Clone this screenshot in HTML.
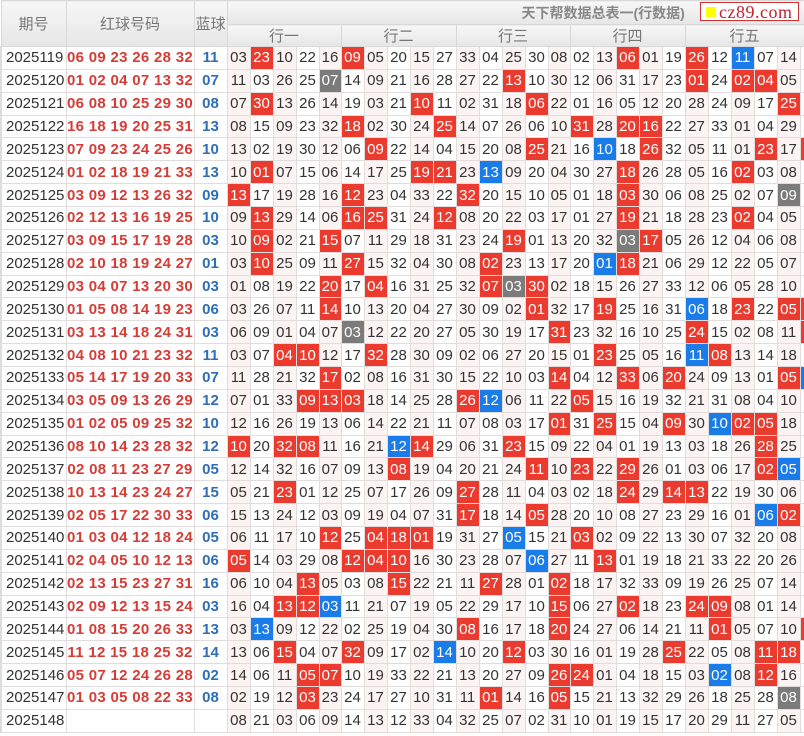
<!DOCTYPE html>
<html><head><meta charset="utf-8"><style>
body{margin:0;width:804px;height:736px;overflow:hidden;background:#fff;font-family:"Liberation Sans","Noto Sans CJK SC",sans-serif;}
table{border-collapse:collapse;table-layout:fixed;width:804px;position:absolute;left:0;top:0}
td{padding:0;text-align:center;font-size:15px;color:#333;border:1px solid #e2dcdc;height:21.87px;line-height:21px;white-space:nowrap;overflow:hidden;background:#fff}
tr.d td:nth-child(n+4){background:#fcf4f2}
tr.d td:nth-child(2n+5){background:#fff}
tr.d td:first-child{text-align:left;padding-left:4px;border-left:2px solid #ddd}
td.h{color:#d63c36;font-weight:bold;font-size:15px;letter-spacing:0.3px}
td.l{color:#2e6db8;font-weight:bold}
tr.d td.r{background:#eb3b2f;color:#fff}
tr.d td.b{background:#1a7ce8;color:#fff}
tr.d td.g{background:#7b7b7b;color:#fff}
tr.d td:nth-child(4),tr.d td:nth-child(9),tr.d td:nth-child(14),tr.d td:nth-child(19),tr.d td:nth-child(24),tr.d td:nth-child(29){border-left:1.5px solid #000}
th{font-weight:normal;color:#777;font-size:15px;background:linear-gradient(#f7f7f7,#e6e6e6);border:1px solid #d8d8d8;padding:0}
.t1 th{height:23px}
.t2 th{height:21px}
.logo{position:absolute;left:700px;top:2px;width:99px;height:19px;background:#fff;border:1px solid #c33;box-sizing:border-box}
.logo i{position:absolute;left:5px;top:4px;width:10px;height:10px;background:#ff0}
.logo span{position:absolute;left:18px;top:-1px;font-family:"Liberation Serif",serif;color:#c0232d;font-size:18px;letter-spacing:0.5px}
</style></head><body>
<table>
<colgroup><col style="width:65px"><col style="width:128px"><col style="width:33px">
<col style="width:23px"><col style="width:23px"><col style="width:23px"><col style="width:23px"><col style="width:22px">
<col style="width:23px"><col style="width:23px"><col style="width:23px"><col style="width:23px"><col style="width:23px">
<col style="width:23px"><col style="width:23px"><col style="width:23px"><col style="width:23px"><col style="width:22px">
<col style="width:23px"><col style="width:23px"><col style="width:23px"><col style="width:23px"><col style="width:23px">
<col style="width:23px"><col style="width:23px"><col style="width:23px"><col style="width:23px"><col style="width:23px">
<col style="width:4px"></colgroup>
<tr class="t1"><th rowspan="2">期号</th><th rowspan="2">红球号码</th><th rowspan="2">蓝球</th><th colspan="26" style="text-align:left;padding-left:294px;font-weight:bold;color:#888;font-size:14px">天下帮数据总表一(行数据)</th></tr>
<tr class="t2"><th colspan="5">行一</th><th colspan="5">行二</th><th colspan="5">行三</th><th colspan="5">行四</th><th colspan="6" style="text-align:left;padding-left:44px">行五</th></tr>
<tr class="d"><td>2025119</td><td class="h">06 09 23 26 28 32</td><td class="l">11</td><td>03</td><td class="r">23</td><td>10</td><td>22</td><td>16</td><td class="r">09</td><td>05</td><td>20</td><td>15</td><td>27</td><td>33</td><td>04</td><td>25</td><td>30</td><td>08</td><td>02</td><td>13</td><td class="r">06</td><td>01</td><td>19</td><td class="r">26</td><td>12</td><td class="b">11</td><td>07</td><td>14</td><td></td></tr>
<tr class="d"><td>2025120</td><td class="h">01 02 04 07 13 32</td><td class="l">07</td><td>11</td><td>03</td><td>26</td><td>25</td><td class="g">07</td><td>14</td><td>09</td><td>21</td><td>16</td><td>28</td><td>27</td><td>22</td><td class="r">13</td><td>10</td><td>30</td><td>12</td><td>06</td><td>31</td><td>17</td><td>23</td><td class="r">01</td><td>24</td><td class="r">02</td><td class="r">04</td><td>05</td><td></td></tr>
<tr class="d"><td>2025121</td><td class="h">06 08 10 25 29 30</td><td class="l">08</td><td>07</td><td class="r">30</td><td>13</td><td>26</td><td>14</td><td>19</td><td>03</td><td>21</td><td class="r">10</td><td>11</td><td>02</td><td>31</td><td>18</td><td class="r">06</td><td>22</td><td>01</td><td>16</td><td>05</td><td>12</td><td>20</td><td>28</td><td>24</td><td>09</td><td>17</td><td class="r">25</td><td></td></tr>
<tr class="d"><td>2025122</td><td class="h">16 18 19 20 25 31</td><td class="l">13</td><td>08</td><td>15</td><td>09</td><td>23</td><td>32</td><td class="r">18</td><td>02</td><td>30</td><td>24</td><td class="r">25</td><td>14</td><td>07</td><td>26</td><td>06</td><td>10</td><td class="r">31</td><td>28</td><td class="r">20</td><td class="r">16</td><td>22</td><td>27</td><td>33</td><td>01</td><td>04</td><td>29</td><td></td></tr>
<tr class="d"><td>2025123</td><td class="h">07 09 23 24 25 26</td><td class="l">10</td><td>13</td><td>02</td><td>19</td><td>30</td><td>12</td><td>06</td><td class="r">09</td><td>22</td><td>14</td><td>04</td><td>15</td><td>20</td><td>08</td><td class="r">25</td><td>21</td><td>16</td><td class="b">10</td><td>18</td><td class="r">26</td><td>32</td><td>05</td><td>11</td><td>01</td><td class="r">23</td><td>17</td><td class="r"></td></tr>
<tr class="d"><td>2025124</td><td class="h">01 02 18 19 21 33</td><td class="l">13</td><td>10</td><td class="r">01</td><td>07</td><td>15</td><td>06</td><td>14</td><td>17</td><td>25</td><td class="r">19</td><td class="r">21</td><td>23</td><td class="b">13</td><td>09</td><td>20</td><td>04</td><td>30</td><td>27</td><td class="r">18</td><td>26</td><td>28</td><td>05</td><td>16</td><td class="r">02</td><td>03</td><td>08</td><td></td></tr>
<tr class="d"><td>2025125</td><td class="h">03 09 12 13 26 32</td><td class="l">09</td><td class="r">13</td><td>17</td><td>19</td><td>28</td><td>16</td><td class="r">12</td><td>23</td><td>04</td><td>33</td><td>22</td><td class="r">32</td><td>20</td><td>15</td><td>10</td><td>05</td><td>01</td><td>18</td><td class="r">03</td><td>30</td><td>06</td><td>08</td><td>25</td><td>02</td><td>07</td><td class="g">09</td><td></td></tr>
<tr class="d"><td>2025126</td><td class="h">02 12 13 16 19 25</td><td class="l">10</td><td>09</td><td class="r">13</td><td>29</td><td>14</td><td>06</td><td class="r">16</td><td class="r">25</td><td>31</td><td>24</td><td class="r">12</td><td>08</td><td>20</td><td>22</td><td>03</td><td>17</td><td>01</td><td>27</td><td class="r">19</td><td>21</td><td>18</td><td>28</td><td>23</td><td class="r">02</td><td>04</td><td>05</td><td></td></tr>
<tr class="d"><td>2025127</td><td class="h">03 09 15 17 19 28</td><td class="l">03</td><td>10</td><td class="r">09</td><td>02</td><td>21</td><td class="r">15</td><td>07</td><td>11</td><td>29</td><td>18</td><td>31</td><td>23</td><td>24</td><td class="r">19</td><td>01</td><td>13</td><td>20</td><td>32</td><td class="g">03</td><td class="r">17</td><td>05</td><td>26</td><td>12</td><td>04</td><td>06</td><td>08</td><td></td></tr>
<tr class="d"><td>2025128</td><td class="h">02 10 18 19 24 27</td><td class="l">01</td><td>03</td><td class="r">10</td><td>25</td><td>09</td><td>11</td><td class="r">27</td><td>15</td><td>32</td><td>04</td><td>30</td><td>08</td><td class="r">02</td><td>23</td><td>13</td><td>17</td><td>20</td><td class="b">01</td><td class="r">18</td><td>21</td><td>06</td><td>29</td><td>12</td><td>22</td><td>05</td><td>07</td><td></td></tr>
<tr class="d"><td>2025129</td><td class="h">03 04 07 13 20 30</td><td class="l">03</td><td>01</td><td>08</td><td>19</td><td>22</td><td class="r">20</td><td>17</td><td class="r">04</td><td>16</td><td>31</td><td>25</td><td>32</td><td class="r">07</td><td class="g">03</td><td class="r">30</td><td>02</td><td>18</td><td>15</td><td>26</td><td>27</td><td>33</td><td>12</td><td>06</td><td>05</td><td>28</td><td>10</td><td></td></tr>
<tr class="d"><td>2025130</td><td class="h">01 05 08 14 19 23</td><td class="l">06</td><td>03</td><td>26</td><td>07</td><td>11</td><td class="r">14</td><td>10</td><td>13</td><td>20</td><td>04</td><td>27</td><td>30</td><td>09</td><td>02</td><td class="r">01</td><td>32</td><td>17</td><td class="r">19</td><td>25</td><td>16</td><td>31</td><td class="b">06</td><td>18</td><td class="r">23</td><td>22</td><td class="r">05</td><td class="r"></td></tr>
<tr class="d"><td>2025131</td><td class="h">03 13 14 18 24 31</td><td class="l">03</td><td>06</td><td>09</td><td>01</td><td>04</td><td>07</td><td class="g">03</td><td>12</td><td>22</td><td>20</td><td>27</td><td>05</td><td>30</td><td>19</td><td>17</td><td class="r">31</td><td>23</td><td>32</td><td>16</td><td>10</td><td>25</td><td class="r">24</td><td>15</td><td>02</td><td>08</td><td>11</td><td class="r"></td></tr>
<tr class="d"><td>2025132</td><td class="h">04 08 10 21 23 32</td><td class="l">11</td><td>03</td><td>07</td><td class="r">04</td><td class="r">10</td><td>12</td><td>17</td><td class="r">32</td><td>28</td><td>30</td><td>09</td><td>02</td><td>06</td><td>27</td><td>20</td><td>15</td><td>01</td><td class="r">23</td><td>25</td><td>05</td><td>16</td><td class="b">11</td><td class="r">08</td><td>13</td><td>14</td><td>18</td><td></td></tr>
<tr class="d"><td>2025133</td><td class="h">05 14 17 19 20 33</td><td class="l">07</td><td>11</td><td>28</td><td>21</td><td>32</td><td class="r">17</td><td>02</td><td>08</td><td>16</td><td>31</td><td>30</td><td>15</td><td>22</td><td>10</td><td>03</td><td class="r">14</td><td>04</td><td>12</td><td class="r">33</td><td>06</td><td class="r">20</td><td>24</td><td>09</td><td>13</td><td>01</td><td class="r">05</td><td class="b"></td></tr>
<tr class="d"><td>2025134</td><td class="h">03 05 09 13 26 29</td><td class="l">12</td><td>07</td><td>01</td><td>33</td><td class="r">09</td><td class="r">13</td><td class="r">03</td><td>18</td><td>14</td><td>25</td><td>28</td><td class="r">26</td><td class="b">12</td><td>06</td><td>11</td><td>22</td><td class="r">05</td><td>15</td><td>16</td><td>19</td><td>32</td><td>21</td><td>31</td><td>08</td><td>04</td><td>10</td><td></td></tr>
<tr class="d"><td>2025135</td><td class="h">01 02 05 09 25 32</td><td class="l">10</td><td>12</td><td>16</td><td>26</td><td>19</td><td>13</td><td>06</td><td>14</td><td>22</td><td>21</td><td>11</td><td>07</td><td>08</td><td>03</td><td>17</td><td class="r">01</td><td>31</td><td class="r">25</td><td>15</td><td>04</td><td class="r">09</td><td>30</td><td class="b">10</td><td class="r">02</td><td class="r">05</td><td>18</td><td></td></tr>
<tr class="d"><td>2025136</td><td class="h">08 10 14 23 28 32</td><td class="l">12</td><td class="r">10</td><td>20</td><td class="r">32</td><td class="r">08</td><td>11</td><td>16</td><td>21</td><td class="b">12</td><td class="r">14</td><td>29</td><td>06</td><td>31</td><td class="r">23</td><td>15</td><td>09</td><td>22</td><td>04</td><td>01</td><td>19</td><td>13</td><td>03</td><td>18</td><td>26</td><td class="r">28</td><td>25</td><td></td></tr>
<tr class="d"><td>2025137</td><td class="h">02 08 11 23 27 29</td><td class="l">05</td><td>12</td><td>14</td><td>32</td><td>16</td><td>07</td><td>09</td><td>13</td><td class="r">08</td><td>19</td><td>04</td><td>20</td><td>21</td><td>24</td><td class="r">11</td><td>10</td><td class="r">23</td><td>22</td><td class="r">29</td><td>26</td><td>01</td><td>03</td><td>06</td><td>17</td><td class="r">02</td><td class="b">05</td><td></td></tr>
<tr class="d"><td>2025138</td><td class="h">10 13 14 23 24 27</td><td class="l">15</td><td>05</td><td>21</td><td class="r">23</td><td>01</td><td>12</td><td>25</td><td>07</td><td>17</td><td>26</td><td>09</td><td class="r">27</td><td>28</td><td>11</td><td>04</td><td>03</td><td>02</td><td>18</td><td class="r">24</td><td>29</td><td class="r">14</td><td class="r">13</td><td>22</td><td>19</td><td>30</td><td>06</td><td></td></tr>
<tr class="d"><td>2025139</td><td class="h">02 05 17 22 30 33</td><td class="l">06</td><td>15</td><td>13</td><td>24</td><td>12</td><td>03</td><td>09</td><td>19</td><td>04</td><td>07</td><td>31</td><td class="r">17</td><td>18</td><td>14</td><td class="r">05</td><td>28</td><td>20</td><td>10</td><td>08</td><td>27</td><td>23</td><td>29</td><td>16</td><td>01</td><td class="b">06</td><td class="r">02</td><td></td></tr>
<tr class="d"><td>2025140</td><td class="h">01 03 04 12 18 24</td><td class="l">05</td><td>06</td><td>11</td><td>17</td><td>10</td><td class="r">12</td><td>25</td><td class="r">04</td><td class="r">18</td><td class="r">01</td><td>19</td><td>31</td><td>27</td><td class="b">05</td><td>15</td><td>21</td><td class="r">03</td><td>02</td><td>09</td><td>22</td><td>13</td><td>30</td><td>07</td><td>32</td><td>20</td><td>08</td><td></td></tr>
<tr class="d"><td>2025141</td><td class="h">02 04 05 10 12 13</td><td class="l">06</td><td class="r">05</td><td>14</td><td>03</td><td>29</td><td>08</td><td class="r">12</td><td class="r">04</td><td class="r">10</td><td>16</td><td>30</td><td>23</td><td>28</td><td>07</td><td class="b">06</td><td>27</td><td>11</td><td class="r">13</td><td>01</td><td>19</td><td>18</td><td>21</td><td>33</td><td>22</td><td>20</td><td>26</td><td></td></tr>
<tr class="d"><td>2025142</td><td class="h">02 13 15 23 27 31</td><td class="l">16</td><td>06</td><td>10</td><td>04</td><td class="r">13</td><td>05</td><td>03</td><td>08</td><td class="r">15</td><td>22</td><td>21</td><td>11</td><td class="r">27</td><td>28</td><td>01</td><td class="r">02</td><td>18</td><td>17</td><td>32</td><td>33</td><td>09</td><td>19</td><td>26</td><td>25</td><td>07</td><td>14</td><td></td></tr>
<tr class="d"><td>2025143</td><td class="h">02 09 12 13 15 24</td><td class="l">03</td><td>16</td><td>04</td><td class="r">13</td><td class="r">12</td><td class="b">03</td><td>11</td><td>21</td><td>07</td><td>19</td><td>05</td><td>22</td><td>29</td><td>17</td><td>10</td><td class="r">15</td><td>06</td><td>27</td><td class="r">02</td><td>18</td><td>23</td><td class="r">24</td><td class="r">09</td><td>08</td><td>01</td><td>14</td><td></td></tr>
<tr class="d"><td>2025144</td><td class="h">01 08 15 20 26 33</td><td class="l">13</td><td>03</td><td class="b">13</td><td>09</td><td>12</td><td>22</td><td>02</td><td>25</td><td>19</td><td>04</td><td>30</td><td class="r">08</td><td>16</td><td>17</td><td>18</td><td class="r">20</td><td>24</td><td>27</td><td>06</td><td>14</td><td>21</td><td>11</td><td class="r">01</td><td>05</td><td>07</td><td>10</td><td class="r"></td></tr>
<tr class="d"><td>2025145</td><td class="h">11 12 15 18 25 32</td><td class="l">14</td><td>13</td><td>06</td><td class="r">15</td><td>04</td><td>07</td><td class="r">32</td><td>09</td><td>17</td><td>02</td><td class="b">14</td><td>10</td><td>20</td><td class="r">12</td><td>03</td><td>30</td><td>16</td><td>01</td><td>19</td><td>28</td><td class="r">25</td><td>22</td><td>05</td><td>08</td><td class="r">11</td><td class="r">18</td><td></td></tr>
<tr class="d"><td>2025146</td><td class="h">05 07 12 24 26 28</td><td class="l">02</td><td>14</td><td>06</td><td>11</td><td class="r">05</td><td class="r">07</td><td>10</td><td>19</td><td>33</td><td>22</td><td>21</td><td>13</td><td>20</td><td>27</td><td>09</td><td class="r">26</td><td class="r">24</td><td>01</td><td>04</td><td>18</td><td>15</td><td>03</td><td class="b">02</td><td>08</td><td class="r">12</td><td>16</td><td></td></tr>
<tr class="d"><td>2025147</td><td class="h">01 03 05 08 22 33</td><td class="l">08</td><td>02</td><td>19</td><td>12</td><td class="r">03</td><td>23</td><td>24</td><td>17</td><td>27</td><td>10</td><td>31</td><td>11</td><td class="r">01</td><td>14</td><td>16</td><td class="r">05</td><td>15</td><td>21</td><td>13</td><td>32</td><td>29</td><td>26</td><td>18</td><td>25</td><td>28</td><td class="g">08</td><td></td></tr>
<tr class="d"><td>2025148</td><td class="h"></td><td class="l"></td><td>08</td><td>21</td><td>03</td><td>06</td><td>09</td><td>14</td><td>13</td><td>12</td><td>33</td><td>04</td><td>32</td><td>25</td><td>07</td><td>02</td><td>31</td><td>10</td><td>01</td><td>19</td><td>15</td><td>17</td><td>20</td><td>29</td><td>11</td><td>27</td><td>05</td><td></td></tr>
</table>
<div class="logo"><i></i><span>cz89.com</span></div>
</body></html>
